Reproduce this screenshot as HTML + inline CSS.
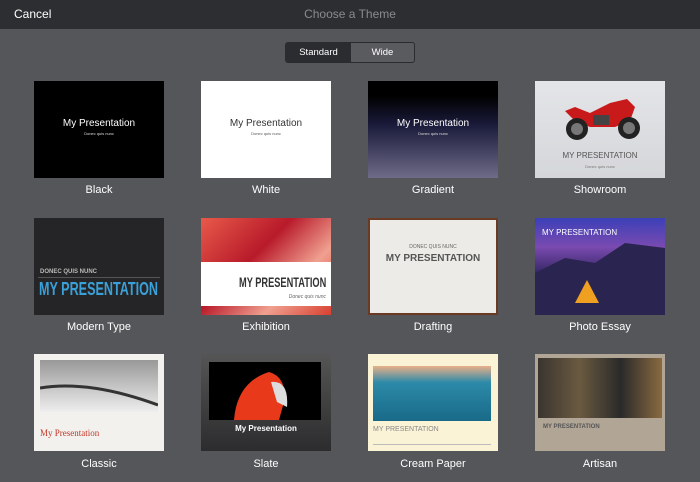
<!DOCTYPE html>
<html><head><style>
*{margin:0;padding:0;box-sizing:border-box}
body{width:700px;height:482px;background:#55565a;font-family:"Liberation Sans",sans-serif;position:relative;overflow:hidden}
.hdr{position:absolute;left:0;top:0;width:700px;height:29px;background:#2d2e31}
.cancel{position:absolute;left:14px;top:7px;color:#fff;font-size:12px}
.title{position:absolute;left:0;width:700px;top:7px;text-align:center;color:#8a8b8e;font-size:12px}
.seg{position:absolute;left:285px;top:42px;width:130px;height:21px;border:1px solid #2a2b2e;border-radius:3px;overflow:hidden;background:#5a5b5f}
.seg div{position:absolute;top:0;height:19px;line-height:19px;font-size:9.5px;color:#fff;text-align:center}
.t{position:absolute;width:130px;height:97px;overflow:hidden;white-space:nowrap}
.l{position:absolute;width:130px;text-align:center;color:#fff;font-size:11px}
.c{position:absolute;left:0;width:100%;text-align:center}
.sx{display:inline-block;transform-origin:left top}
</style></head><body>
<div class="hdr"><div class="cancel">Cancel</div><div class="title">Choose a Theme</div></div>
<div class="seg"><div style="left:0;width:65px;background:#2b2c2f">Standard</div><div style="left:65px;width:63px">Wide</div></div>

<!-- row1 -->
<div class="t" style="left:34px;top:81px;background:#000"><div class="c" style="top:37px;color:#fff;font-size:10px">My Presentation</div><div class="c" style="top:50px;color:#ddd;font-size:4px">Donec quis nunc</div></div>
<div class="t" style="left:201px;top:81px;background:#fff"><div class="c" style="top:37px;color:#333;font-size:10px">My Presentation</div><div class="c" style="top:50px;color:#555;font-size:4px">Donec quis nunc</div></div>
<div class="t" style="left:368px;top:81px;background:linear-gradient(#000 15%,#1a1a3a 45%,#6e6c88)"><div class="c" style="top:37px;color:#fff;font-size:10px">My Presentation</div><div class="c" style="top:50px;color:#ddd;font-size:4px">Donec quis nunc</div></div>
<div class="t" style="left:535px;top:81px;background:linear-gradient(#e4e5e8,#d5d6d9)">
<svg width="130" height="97" style="position:absolute;left:0;top:0"><path d="M30 30 L40 26 L55 32 L75 22 L92 18 L100 26 L95 40 L80 46 L55 46 L40 40Z" fill="#c81a1a"/><circle cx="42" cy="48" r="11" fill="#222"/><circle cx="42" cy="48" r="6" fill="#777"/><circle cx="94" cy="47" r="11" fill="#222"/><circle cx="94" cy="47" r="6" fill="#777"/><rect x="58" y="34" width="16" height="10" fill="#444"/></svg>
<div class="c" style="top:70px;color:#555;font-size:8px">MY PRESENTATION</div><div class="c" style="top:83px;color:#777;font-size:4px">Donec quis nunc</div></div>
<div class="l" style="left:34px;top:184px">Black</div><div class="l" style="left:201px;top:184px">White</div><div class="l" style="left:368px;top:184px">Gradient</div><div class="l" style="left:535px;top:184px">Showroom</div>

<!-- row2 -->
<div class="t" style="left:34px;top:218px;background:#252527"><div style="position:absolute;left:6px;top:51px;color:#bbb;font-size:6px;font-weight:bold">DONEC QUIS NUNC</div><div style="position:absolute;left:4px;top:59px;width:122px;border-top:1px solid #555"></div><div style="position:absolute;left:5px;top:61px;color:#3aa0d8;font-size:18px;font-weight:bold"><span class="sx" style="transform:scaleX(0.7)">MY PRESENTATION</span></div></div>
<div class="t" style="left:201px;top:218px;background:linear-gradient(135deg,#e85a4a,#b81a2a 40%,#f0a090 70%,#d84030)"><div style="position:absolute;left:0;top:44px;width:130px;height:44px;background:#fff"></div><div style="position:absolute;left:38px;top:56px;color:#333;font-size:14px;font-weight:bold"><span class="sx" style="transform:scaleX(0.66)">MY PRESENTATION</span></div><div style="position:absolute;right:5px;top:76px;color:#666;font-size:5px;font-style:italic">Donec quis nunc</div></div>
<div class="t" style="left:368px;top:218px;background:#ecebe7;border:2px solid #6a3a24"><div class="c" style="top:24px;color:#666;font-size:5px">DONEC QUIS NUNC</div><div class="c" style="top:33px;color:#555;font-size:10px;font-weight:bold">MY PRESENTATION</div></div>
<div class="t" style="left:535px;top:218px;background:linear-gradient(#3b40b8,#7a4ab0 30%,#3a2a6a 55%,#1a1a3a)"><div style="position:absolute;left:7px;top:10px;color:#fff;font-size:8px">MY PRESENTATION</div><svg width="130" height="97" style="position:absolute;left:0;top:0"><path d="M0 55 L30 40 L60 45 L90 25 L130 30 L130 97 L0 97Z" fill="#2a2550"/><path d="M40 85 L52 62 L64 85Z" fill="#f0a020"/></svg></div>
<div class="l" style="left:34px;top:321px">Modern Type</div><div class="l" style="left:201px;top:321px">Exhibition</div><div class="l" style="left:368px;top:321px">Drafting</div><div class="l" style="left:535px;top:321px">Photo Essay</div>

<!-- row3 -->
<div class="t" style="left:34px;top:354px;background:#f2f1ee"><div style="position:absolute;left:6px;top:6px;width:118px;height:52px;background:linear-gradient(#999,#eee)"><svg width="118" height="52"><path d="M0 28 Q50 20 118 45" stroke="#333" stroke-width="3" fill="none"/></svg></div><div style="position:absolute;left:6px;top:74px;color:#c0392b;font-size:9px;font-family:'Liberation Serif',serif">My Presentation</div></div>
<div class="t" style="left:201px;top:354px;background:linear-gradient(#555,#2c2c2e)"><div style="position:absolute;left:8px;top:8px;width:112px;height:58px;background:#000"><svg width="112" height="58"><path d="M25 58 Q28 20 60 10 Q78 15 75 40 L70 58Z" fill="#e83a1a"/><path d="M62 20 Q80 18 78 45 L68 40Z" fill="#ddd"/></svg></div><div class="c" style="top:70px;color:#fff;font-size:8px;font-weight:bold">My Presentation</div></div>
<div class="t" style="left:368px;top:354px;background:#fbf3d6"><div style="position:absolute;left:5px;top:12px;width:118px;height:55px;background:linear-gradient(#e8b08a,#2c8aa8 30%,#186a88)"></div><div style="position:absolute;left:5px;top:72px;color:#888;font-size:7px">MY PRESENTATION</div><div style="position:absolute;left:5px;top:90px;width:118px;border-top:1px solid #bbb"></div></div>
<div class="t" style="left:535px;top:354px;background:#b1a596"><div style="position:absolute;left:3px;top:4px;width:124px;height:60px;background:linear-gradient(90deg,#3a3530,#6a5a40,#2a2a2a,#8a6a40)"></div><div style="position:absolute;left:8px;top:70px;color:#555;font-size:6px;font-weight:bold">MY PRESENTATION</div></div>
<div class="l" style="left:34px;top:458px">Classic</div><div class="l" style="left:201px;top:458px">Slate</div><div class="l" style="left:368px;top:458px">Cream Paper</div><div class="l" style="left:535px;top:458px">Artisan</div>
</body></html>
